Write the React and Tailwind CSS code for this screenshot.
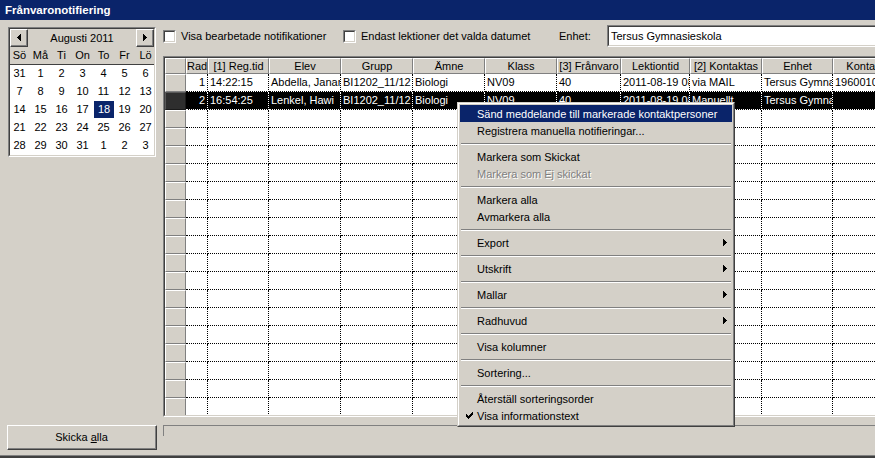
import React from "react";

const cols = [
  { w: 22, h: "Rad" },
  { w: 61, h: "[1] Reg.tid" },
  { w: 72, h: "Elev" },
  { w: 72, h: "Grupp" },
  { w: 72, h: "Ämne" },
  { w: 72, h: "Klass" },
  { w: 64, h: "[3] Frånvaro" },
  { w: 69, h: "Lektiontid" },
  { w: 72, h: "[2] Kontaktas" },
  { w: 71, h: "Enhet" },
  { w: 64, h: "Kontakt" },
];

const rows = [
  ["1", "14:22:15", "Abdella, Janart", "BI1202_11/12", "Biologi", "NV09", "40", "2011-08-19 08:10", "via MAIL", "Tersus Gymnasieskola", "19600101"],
  ["2", "16:54:25", "Lenkel, Hawi", "BI1202_11/12", "Biologi", "NV09", "40", "2011-08-19 08:10", "Manuellt", "Tersus Gymnasieskola", ""],
];

const days = [
  [31, 1, 2, 3, 4, 5, 6],
  [7, 8, 9, 10, 11, 12, 13],
  [14, 15, 16, 17, 18, 19, 20],
  [21, 22, 23, 24, 25, 26, 27],
  [28, 29, 30, 31, 1, 2, 3],
];

function TriLeft() {
  return (
    <svg width="4" height="7" viewBox="0 0 4 7" shapeRendering="crispEdges">
      <rect x="0" y="3" width="1" height="1" fill="#000" />
      <rect x="1" y="2" width="1" height="3" fill="#000" />
      <rect x="2" y="1" width="1" height="5" fill="#000" />
      <rect x="3" y="0" width="1" height="7" fill="#000" />
    </svg>
  );
}

function TriRight() {
  return (
    <svg width="4" height="7" viewBox="0 0 4 7" shapeRendering="crispEdges">
      <rect x="0" y="0" width="1" height="7" fill="#000" />
      <rect x="1" y="1" width="1" height="5" fill="#000" />
      <rect x="2" y="2" width="1" height="3" fill="#000" />
      <rect x="3" y="3" width="1" height="1" fill="#000" />
    </svg>
  );
}

function Check() {
  return (
    <svg width="7" height="7" viewBox="0 0 7 7" shapeRendering="crispEdges">
      <rect x="0" y="2" width="1" height="3" fill="#000" />
      <rect x="1" y="3" width="1" height="3" fill="#000" />
      <rect x="2" y="4" width="1" height="3" fill="#000" />
      <rect x="3" y="3" width="1" height="3" fill="#000" />
      <rect x="4" y="2" width="1" height="3" fill="#000" />
      <rect x="5" y="1" width="1" height="3" fill="#000" />
      <rect x="6" y="0" width="1" height="3" fill="#000" />
    </svg>
  );
}

function RaisedBtn({ className, children }) {
  return (
    <div className={`border-t border-l border-white border-b border-r border-b-[#404040] border-r-[#404040] bg-[#d4d0c8] ${className}`}>
      <div className="w-full h-full border-b border-r border-[#808080] flex items-center justify-center">
        {children}
      </div>
    </div>
  );
}

function Checkbox() {
  return (
    <div className="w-[13px] h-[13px] shrink-0 border-t border-l border-[#808080] border-b border-r border-b-white border-r-white">
      <div className="w-full h-full bg-white border-t border-l border-[#404040] border-b border-r border-b-[#d4d0c8] border-r-[#d4d0c8]" />
    </div>
  );
}

function Calendar() {
  return (
    <div className="w-[148px] h-[130px] ml-px border-t border-l border-[#808080] border-b border-r border-b-white border-r-white">
      <div className="w-full h-full border-t border-l border-[#404040] border-b border-r border-b-[#d4d0c8] border-r-[#d4d0c8] flex flex-col">
        <div className="h-[18px] flex items-center justify-between bg-[#d4d0c8]">
          <RaisedBtn className="w-[18px] h-[18px]">
            <TriLeft />
          </RaisedBtn>
          <div className="flex-1 text-center leading-[18px]">Augusti 2011</div>
          <RaisedBtn className="w-[18px] h-[18px]">
            <TriRight />
          </RaisedBtn>
        </div>
        <div className="h-[18px] bg-[#d4d0c8] border-b border-[#404040]">
          <div className="-ml-px w-[147px] grid grid-cols-[repeat(7,21px)] leading-[17px] text-center">
            {["Sö", "Må", "Ti", "On", "To", "Fr", "Lö"].map((d) => (
              <div key={d}>{d}</div>
            ))}
          </div>
        </div>
        <div className="flex-1 bg-white">
          <div className="-ml-px w-[147px] grid grid-cols-[repeat(7,21px)] grid-rows-[repeat(5,18px)] text-center">
            {days.flat().map((d, i) =>
              d === 18 && i === 18 ? (
                <div key={i} className="flex justify-end">
                  <div className="w-[20px] h-[17px] bg-[#0a246a] text-white leading-[17px]">18</div>
                </div>
              ) : (
                <div key={i} className="leading-[17px]">{d}</div>
              )
            )}
          </div>
        </div>
      </div>
    </div>
  );
}

function Grid() {
  const emptyRows = Array.from({ length: 17 });
  return (
    <div className="w-[740px] h-[361px] border-t border-l border-[#808080] border-b border-b-white">
      <div className="w-full h-full border-t border-l border-[#404040] border-b border-b-[#d4d0c8] bg-white overflow-hidden flex flex-col">
        <div className="flex h-[16px] shrink-0 bg-[#d4d0c8]">
          <div className="w-[21px] shrink-0 border-t border-l border-white border-b border-r border-b-[#808080] border-r-[#808080]" />
          {cols.map((c, i) => (
            <div
              key={i}
              style={{ width: c.w }}
              className="shrink-0 border-t border-l border-white border-b border-r border-b-[#808080] border-r-[#808080] text-center whitespace-nowrap overflow-hidden leading-[14px]"
            >
              {c.h}
            </div>
          ))}
        </div>
        {rows.map((r, ri) => {
          const sel = ri === 1;
          return (
            <div key={ri} className={`flex h-[18px] shrink-0 ${sel ? "bg-black text-white" : ""}`}>
              <div
                className={`w-[21px] shrink-0 border-t border-l border-b border-r ${
                  sel ? "bg-[#2e2e2e] border-[#5a5a5a] border-b-[#1a1a1a] border-r-[#1a1a1a]" : "bg-[#d4d0c8] border-white border-b-[#808080] border-r-[#808080]"
                }`}
              />
              {cols.map((c, i) => (
                <div
                  key={i}
                  style={{ width: c.w }}
                  className={`shrink-0 border-r border-b border-dotted ${sel ? "border-white" : "border-black"} whitespace-nowrap overflow-hidden leading-[17px] ${
                    i === 0 ? "text-right pr-[2px]" : "pl-[2px]"
                  }`}
                >
                  {r[i]}
                </div>
              ))}
            </div>
          );
        })}
        {emptyRows.map((_, ri) => (
          <div key={ri} className="flex h-[18px] shrink-0">
            <div className="w-[21px] shrink-0 bg-[#d4d0c8] border-t border-l border-white border-b border-r border-b-[#808080] border-r-[#808080]" />
            {cols.map((c, i) => (
              <div key={i} style={{ width: c.w }} className="shrink-0 border-r border-b border-dotted border-black" />
            ))}
          </div>
        ))}
      </div>
    </div>
  );
}

function MenuItem({ children, hl, disabled, arrow, check }) {
  return (
    <div
      className={`relative h-[17px] flex items-center pl-[17px] pr-[5px] whitespace-nowrap ${
        hl ? "bg-[#0a246a] text-white" : ""
      } ${disabled ? "text-[#808080] [text-shadow:1px_1px_0_#ffffff]" : ""}`}
    >
      {check && (
        <span className="absolute left-[6px] top-[5px] flex">
          <Check />
        </span>
      )}
      <span className="leading-[17px] pt-px">{children}</span>
      {arrow && (
        <span className="ml-auto flex">
          <TriRight />
        </span>
      )}
    </div>
  );
}

function Sep() {
  return (
    <div className="h-[9px] flex flex-col justify-center px-px">
      <div className="h-px bg-[#808080]" />
      <div className="h-px bg-white" />
    </div>
  );
}

function ContextMenu() {
  return (
    <div className="absolute left-[457px] top-[102px] w-[278px] border-t border-l border-[#d4d0c8] border-b border-r border-b-[#404040] border-r-[#404040] bg-[#d4d0c8]">
      <div className="border-t border-l border-white border-b border-r border-b-[#808080] border-r-[#808080] p-px">
        <MenuItem hl>Sänd meddelande till markerade kontaktpersoner</MenuItem>
        <MenuItem>Registrera manuella notifieringar...</MenuItem>
        <Sep />
        <MenuItem>Markera som Skickat</MenuItem>
        <MenuItem disabled>Markera som Ej skickat</MenuItem>
        <Sep />
        <MenuItem>Markera alla</MenuItem>
        <MenuItem>Avmarkera alla</MenuItem>
        <Sep />
        <MenuItem arrow>Export</MenuItem>
        <Sep />
        <MenuItem arrow>Utskrift</MenuItem>
        <Sep />
        <MenuItem arrow>Mallar</MenuItem>
        <Sep />
        <MenuItem arrow>Radhuvud</MenuItem>
        <Sep />
        <MenuItem>Visa kolumner</MenuItem>
        <Sep />
        <MenuItem>Sortering...</MenuItem>
        <Sep />
        <MenuItem>Återställ sorteringsorder</MenuItem>
        <MenuItem check>Visa informationstext</MenuItem>
      </div>
    </div>
  );
}

export default function App() {
  return (
    <div className="relative w-[875px] h-[458px] overflow-hidden bg-[#d4d0c8] text-black text-[11px] font-['Liberation_Sans',Arial,sans-serif] flex flex-col">
      <div className="h-[20px] shrink-0 bg-[#0a246a] text-white font-bold text-[11.5px] leading-[20px] pl-[5px]">
        Frånvaronotifiering
      </div>
      <div className="flex-1 flex min-h-0">
        <div className="w-[150px] ml-[7px] shrink-0 flex flex-col pt-[7px] pb-[5px]">
          <Calendar />
          <div className="flex-1" />
          <RaisedBtn className="w-[150px] h-[25px]">
            <span>
              Skicka <span className="underline">a</span>lla
            </span>
          </RaisedBtn>
        </div>
        <div className="ml-[6px] w-[740px] shrink-0 flex flex-col">
          <div className="h-[36px] pt-[5px] shrink-0">
            <div className="h-[22px] flex items-center">
              <div className="w-[180px] shrink-0 flex items-center">
                <Checkbox />
                <span className="ml-[5px] whitespace-nowrap">Visa bearbetade notifikationer</span>
              </div>
              <div className="w-[214px] shrink-0 flex items-center">
                <Checkbox />
                <span className="ml-[5px] whitespace-nowrap">Endast lektioner det valda datumet</span>
              </div>
              <div className="w-[50px] shrink-0 pl-[2px]">Enhet:</div>
              <div className="w-[290px] h-[22px] shrink-0 border-t border-l border-[#808080] border-b border-b-white">
                <div className="w-full h-full bg-white border-t border-l border-[#404040] border-b border-b-[#d4d0c8] pl-[2px] leading-[18px]">
                  Tersus Gymnasieskola
                </div>
              </div>
            </div>
          </div>
          <Grid />
          <div className="mt-[8px] h-[11px] border-t border-l border-[#808080]" />
        </div>
      </div>
      <div className="h-px shrink-0 bg-[#808080]" />
      <div className="h-[2px] shrink-0 bg-[#404040]" />
      <ContextMenu />
    </div>
  );
}
